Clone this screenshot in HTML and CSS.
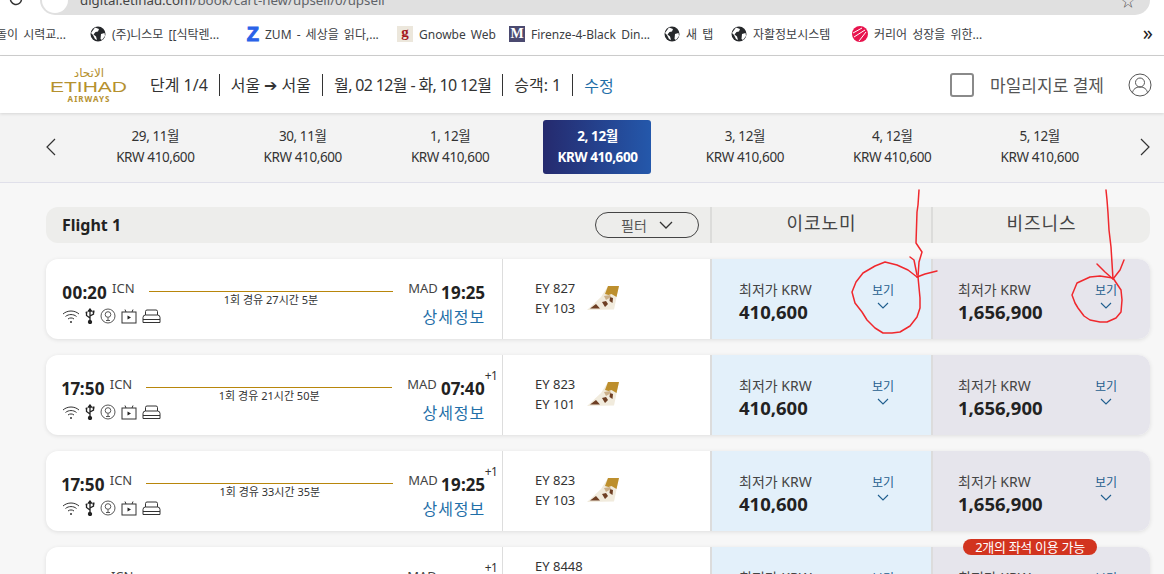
FILE: index.html
```html
<!DOCTYPE html>
<html lang="ko">
<head>
  <meta charset="UTF-8" />
  <title>Etihad Airways</title>
  <link rel="stylesheet" href="styles.css">
</head>
<body>
  <svg class="defs" width="0" height="0">
    <symbol id="globe" viewBox="0 0 16 16">
      <circle cx="8" cy="8" r="7.5" fill="#26282b"/>
      <path d="M5 1.500 9 3 8 5.500 5.500 6 3.500 8.500 6 10.500 7 14 5 13 3 9 1 7ZM11 8l3.500-1 .5 3-3 4-1.500-1z" fill="#fff"/>
    </symbol>
    <symbol id="wifi" viewBox="0 0 18 15" fill="none" stroke="#333" stroke-width="1">
      <path d="M1 5c4.500-4 11.500-4 16 0M3.500 7.500c3-2.600 8-2.600 11 0M6 10c1.700-1.400 4.300-1.400 6 0"/>
      <circle cx="9" cy="13" r="1" fill="#333" stroke="none"/>
    </symbol>
    <symbol id="usb" viewBox="0 0 10 16" fill="none" stroke="#222" stroke-width="1.300">
      <path d="M5 1v14M1.500 5v2.500L5 10M8.500 4v2L5 8"/>
      <circle cx="5" cy="14" r="1.500" fill="#222"/>
      <path d="M3.500 3 5 1l1.500 2z" fill="#222"/>
      <rect x="7.500" y="2.500" width="2" height="2" fill="#222" stroke="none"/>
      <circle cx="1.500" cy="4.500" r="1" fill="#222" stroke="none"/>
    </symbol>
    <symbol id="mic" viewBox="0 0 16 16" fill="none" stroke="#444" stroke-width=".9">
      <circle cx="8" cy="8" r="7"/>
      <circle cx="8" cy="6.500" r="2.800"/>
      <path d="M8 9.500V12M6 12.500h4"/>
    </symbol>
    <symbol id="tv" viewBox="0 0 16 16" fill="none" stroke="#333" stroke-width="1">
      <rect x="1" y="4" width="14" height="11"/>
      <path d="M4 1.500 5 4M12 1.500 11 4"/>
      <path d="M6.500 7.500v4l3.500-2z" fill="#222" stroke="none"/>
    </symbol>
    <symbol id="bed" viewBox="0 0 19 15" fill="none" stroke="#333" stroke-width="1">
      <path d="M3.500 6V2.500q0-1.500 1.500-1.500h9q1.500 0 1.500 1.500V6"/>
      <path d="M1 13.500V8.500Q1 6 3.500 6h12Q18 6 18 8.500v5ZM1 10.500h17"/>
    </symbol>
    <symbol id="tail" viewBox="0 0 32 25">
      <path d="M0 24 14 11 21 0h11l-5 23.500z" fill="#f1ebdd"/>
      <path d="M21 0h11l-2.500 11-5-3-3 1-3.500-1z" fill="#bd8f2d"/>
      <path d="M3 22.500 9 18l4 4.500zM15 16l4-1 2 3-3 3zM23 11l3 1-.5 5-3-2z" fill="#6e3f24"/>
      <path d="M17 10l6-1 1 2-5 3z" fill="#cbb08a"/>
    </symbol>
    <symbol id="down" viewBox="0 0 12 7" fill="none" stroke="#1f5e8e" stroke-width="1.100">
      <path d="M1 1l5 5 5-5"/>
    </symbol>
  </svg>

  <div class="page">
    <div class="addressbar">
      <svg class="reload" width="16" height="16" viewBox="0 0 16 16" fill="none" stroke="#333" stroke-width="1.500"><path d="M13.500 8A5.500 5.500 0 1 1 11 3.400"/></svg>
      <div class="urlpill">
        <span class="lockdot"></span>
        <span class="url">digital.etihad.com<span class="urlpath">/book/cart-new/upsell/0/upsell</span></span>
        <span class="star">☆</span>
      </div>
    </div>

    <div class="bookmarks">
      <span class="bm bm-cut">돌이 시력교...</span>
      <span class="bm bm-w121"><svg class="bmicon"><use href="#globe"/></svg>(주)니스모 [[식탁렌...</span>
      <span class="bm bm-w150"><span class="zicon">Z</span>ZUM - 세상을 읽다,...</span>
      <span class="bm bm-w96"><span class="gicon">g</span>Gnowbe Web</span>
      <span class="bm bm-w137"><span class="micon">M</span>Firenze-4-Black Din...</span>
      <span class="bm bm-w49"><svg class="bmicon"><use href="#globe"/></svg>새 탭</span>
      <span class="bm bm-w105"><svg class="bmicon"><use href="#globe"/></svg>자활정보시스템</span>
      <span class="bm bm-w136"><svg class="bmicon" viewBox="0 0 16 16"><circle cx="8" cy="8" r="8" fill="#e8144e"/><path d="M1 7l9-5M2 11l11-7M7 15l7-9" stroke="#fff" stroke-width="1"/></svg>커리어 성장을 위한...</span>
      <span class="bm-more">»</span>
    </div>

    <header class="topbar">
      <div class="logo">
        <span class="logo-ar">الاتحاد</span>
        <span class="logo-name">ETIHAD</span>
        <span class="logo-sub">AIRWAYS</span>
      </div>
      <div class="trip">
        <span>단계 1/4</span>
        <span>서울 ➔ 서울</span>
        <span class="trip-dates">월, 02 12월 - 화, 10 12월</span>
        <span>승객: 1</span>
        <a class="edit">수정</a>
      </div>
      <div class="miles">
        <span class="checkbox"></span>
        <span class="miles-label">마일리지로 결제</span>
        <svg width="24" height="24" viewBox="0 0 24 24" fill="none" stroke="#555" stroke-width="1"><circle cx="12" cy="12" r="11"/><circle cx="12" cy="9.500" r="4.500"/><path d="M4.500 20c.5-4 3.500-6 7.500-6s7 2 7.500 6"/></svg>
      </div>
    </header>

    <nav class="dates">
      <svg class="date-arrow" width="12" height="20" viewBox="0 0 12 20" fill="none" stroke="#333" stroke-width="1.200"><path d="M10 2 2 10l8 8"/></svg>
      <div class="date-list">
        <div class="date"><span>29, 11월</span><span>KRW 410,600</span></div>
        <div class="date"><span>30, 11월</span><span>KRW 410,600</span></div>
        <div class="date"><span>1, 12월</span><span>KRW 410,600</span></div>
        <div class="date date-on"><span>2, 12월</span><span>KRW 410,600</span></div>
        <div class="date"><span>3, 12월</span><span>KRW 410,600</span></div>
        <div class="date"><span>4, 12월</span><span>KRW 410,600</span></div>
        <div class="date"><span>5, 12월</span><span>KRW 410,600</span></div>
      </div>
      <svg class="date-arrow" width="12" height="20" viewBox="0 0 12 20" fill="none" stroke="#333" stroke-width="1.200"><path d="M2 2l8 8-8 8"/></svg>
    </nav>

    <main class="results">
      <div class="flight-head">
        <div class="flight-title">
          <strong>Flight 1</strong>
          <button class="filter">필터 <svg width="14" height="8" viewBox="0 0 14 8" fill="none" stroke="#333" stroke-width="1.300"><path d="M1 1l6 6 6-6"/></svg></button>
        </div>
        <div class="cabin">이코노미</div>
        <div class="cabin">비즈니스</div>
      </div>

      <article class="flight">
        <div class="leg">
          <div class="leg-top">
            <b class="time">00:20</b><span class="code">ICN</span>
            <div class="route"><i></i><span>1회 경유 27시간 5분</span></div>
            <span class="code">MAD</span><b class="time">19:25</b>
          </div>
          <div class="leg-bottom">
            <div class="amenities">
              <svg class="am-wifi"><use href="#wifi"/></svg><svg class="am-usb"><use href="#usb"/></svg><svg class="am-mic"><use href="#mic"/></svg><svg class="am-tv"><use href="#tv"/></svg><svg class="am-bed"><use href="#bed"/></svg>
            </div>
            <a class="details">상세정보</a>
          </div>
        </div>
        <div class="numbers">
          <div><p>EY 827</p><p>EY 103</p></div>
          <svg class="tail"><use href="#tail"/></svg>
        </div>
        <div class="fare fare-eco">
          <div><p class="fare-label">최저가 KRW</p><p class="fare-price">410,600</p></div>
          <div class="view">보기<svg class="view-arrow"><use href="#down"/></svg></div>
        </div>
        <div class="fare fare-biz">
          <div><p class="fare-label">최저가 KRW</p><p class="fare-price">1,656,900</p></div>
          <div class="view">보기<svg class="view-arrow"><use href="#down"/></svg></div>
        </div>
      </article>

      <article class="flight">
        <div class="leg">
          <div class="leg-top">
            <b class="time">17:50</b><span class="code">ICN</span>
            <div class="route"><i></i><span>1회 경유 21시간 50분</span></div>
            <span class="code">MAD</span><b class="time plus">07:40<sup>+1</sup></b>
          </div>
          <div class="leg-bottom">
            <div class="amenities">
              <svg class="am-wifi"><use href="#wifi"/></svg><svg class="am-usb"><use href="#usb"/></svg><svg class="am-mic"><use href="#mic"/></svg><svg class="am-tv"><use href="#tv"/></svg><svg class="am-bed"><use href="#bed"/></svg>
            </div>
            <a class="details">상세정보</a>
          </div>
        </div>
        <div class="numbers">
          <div><p>EY 823</p><p>EY 101</p></div>
          <svg class="tail"><use href="#tail"/></svg>
        </div>
        <div class="fare fare-eco">
          <div><p class="fare-label">최저가 KRW</p><p class="fare-price">410,600</p></div>
          <div class="view">보기<svg class="view-arrow"><use href="#down"/></svg></div>
        </div>
        <div class="fare fare-biz">
          <div><p class="fare-label">최저가 KRW</p><p class="fare-price">1,656,900</p></div>
          <div class="view">보기<svg class="view-arrow"><use href="#down"/></svg></div>
        </div>
      </article>

      <article class="flight">
        <div class="leg">
          <div class="leg-top">
            <b class="time">17:50</b><span class="code">ICN</span>
            <div class="route"><i></i><span>1회 경유 33시간 35분</span></div>
            <span class="code">MAD</span><b class="time plus">19:25<sup>+1</sup></b>
          </div>
          <div class="leg-bottom">
            <div class="amenities">
              <svg class="am-wifi"><use href="#wifi"/></svg><svg class="am-usb"><use href="#usb"/></svg><svg class="am-mic"><use href="#mic"/></svg><svg class="am-tv"><use href="#tv"/></svg><svg class="am-bed"><use href="#bed"/></svg>
            </div>
            <a class="details">상세정보</a>
          </div>
        </div>
        <div class="numbers">
          <div><p>EY 823</p><p>EY 103</p></div>
          <svg class="tail"><use href="#tail"/></svg>
        </div>
        <div class="fare fare-eco">
          <div><p class="fare-label">최저가 KRW</p><p class="fare-price">410,600</p></div>
          <div class="view">보기<svg class="view-arrow"><use href="#down"/></svg></div>
        </div>
        <div class="fare fare-biz">
          <div><p class="fare-label">최저가 KRW</p><p class="fare-price">1,656,900</p></div>
          <div class="view">보기<svg class="view-arrow"><use href="#down"/></svg></div>
        </div>
      </article>

      <article class="flight">
        <div class="leg">
          <div class="leg-top">
            <b class="time">07:20</b><span class="code">ICN</span>
            <div class="route"><i></i><span>1회 경유</span></div>
            <span class="code">MAD</span><b class="time plus">07:40<sup>+1</sup></b>
          </div>
        </div>
        <div class="numbers">
          <div><p>EY 8448</p><p>EY 823</p><p>EY 101</p></div>
          <svg class="tail"><use href="#tail"/></svg>
        </div>
        <div class="fare fare-eco">
          <div><p class="fare-label">최저가 KRW</p><p class="fare-price">410,600</p></div>
          <div class="view">보기<svg class="view-arrow"><use href="#down"/></svg></div>
        </div>
        <div class="fare fare-biz">
          <span class="seats">2개의 좌석 이용 가능</span>
          <div><p class="fare-label">최저가 KRW</p><p class="fare-price">1,656,900</p></div>
          <div class="view">보기<svg class="view-arrow"><use href="#down"/></svg></div>
        </div>
      </article>
    </main>

    <!-- red pen marks drawn over the screenshot -->
    <svg class="pen" width="1164" height="574" viewBox="0 0 1164 574" fill="none" stroke="#f0282d" stroke-width="1.500" stroke-linejoin="round" stroke-linecap="round">
      <path d="M919 190 918 205 917 212 916 243 922 252 919 262 918 277"/>
      <path d="M910 257 914 260 917 275M937 271 925 274 917 277"/>
      <path d="M917 277 908 270 897 265 885 262 875 266 863 273 856 282 852 292 855 303 862 312 867 320 875 328 883 333 892 333 900 332 910 326 917 317 920 308 920 298 918 277"/>
      <path d="M1106 190 1107 200 1108 213 1109 230 1111 247 1113 279"/>
      <path d="M1097 264 1105 272 1113 279M1124 260 1120 270 1113 279"/>
      <path d="M1113 278 1100 276 1090 277 1077 283 1072 295 1075 303 1078 308 1084 316 1090 320 1100 322 1107 322 1116 318 1121 312 1122 300 1121 290 1113 278"/>
    </svg>
  </div>
</body>
</html>
```

FILE: styles.css
```css
* {
  box-sizing: border-box;
}
html, body {
  margin: 0;
  height: 100%;
  overflow: hidden;
}
body {
  font-family: "Noto Sans", "Noto Sans CJK KR", sans-serif;
  color: #333;
  background: #f7f7f7;
}
p {
  margin: 0;
}
.defs {
  position: absolute;
}
.page {
  position: relative;
  height: 574px;
  overflow: hidden;
}

/* browser chrome */
.addressbar {
  height: 15px;
  background: #fff;
  display: flex;
  overflow: hidden;
}
.reload {
  flex: none;
  margin: -9px 0 0 8px;
}
.urlpill {
  flex: none;
  width: 1110px;
  margin-left: 16px;
  height: 15px;
  background: #e0e0e0;
  border-radius: 0 0 15px 15px;
  display: flex;
  align-items: flex-end;
  position: relative;
}
.lockdot {
  width: 26px;
  height: 26px;
  margin: 0 0 2px 2px;
  background: #fff;
  border-radius: 50%;
  flex: none;
}
.url {
  font-size: 13.300px;
  line-height: 16px;
  margin: 0 0 7px 12px;
  color: #444;
}
.urlpath {
  color: #5f6368;
}
.star {
  position: absolute;
  right: 15px;
  bottom: 7px;
  font-size: 14px;
  line-height: 14px;
  color: #555;
}
.bookmarks {
  height: 41px;
  padding-bottom: 2px;
  background: #fff;
  border-bottom: 1px solid #d0d0d0;
  display: flex;
  align-items: center;
  font-size: 12px;
  word-spacing: 2px;
  color: #3c4043;
  white-space: nowrap;
  position: relative;
}
.bm {
  display: flex;
  align-items: center;
  flex: none;
  gap: 6px;
}
.bm-cut {
  width: 94px;
  margin-left: -4px;
}
.bm-w121 { width: 141px; }
.bm-w150 { width: 166px; }
.bm-w96 { width: 112px; }
.bm-w137 { width: 155px; }
.bm-w49 { width: 67px; }
.bm-w105 { width: 121px; }
.bm-w136 { width: 136px; }
.bmicon {
  width: 16px;
  height: 16px;
  flex: none;
}
.zicon {
  width: 28px;
  height: 16px;
  color: #2a62e8;
  font: 900 20px/16px "Liberation Sans", sans-serif;
  -webkit-text-stroke: 1px #2a62e8;
  text-align: right;
}
.gicon {
  width: 16px;
  height: 16px;
  background: #ece7dc;
  color: #a5171c;
  font: bold 15px/13px "Liberation Serif", serif;
  text-align: center;
}
.micon {
  width: 16px;
  height: 16px;
  background: #4b4a70;
  color: #fff;
  font: bold 14px/16px "Liberation Serif", serif;
  text-align: center;
}
.bm-more {
  position: absolute;
  right: 11px;
  top: 6px;
  font-size: 20px;
  line-height: 24px;
  color: #222;
}

/* site header */
.topbar {
  height: 57px;
  background: #fff;
  display: flex;
  align-items: center;
  padding: 0 12px 0 51px;
  box-shadow: 0 1px 3px rgba(0, 0, 0, .12);
  position: relative;
}
.logo {
  width: 76px;
  display: flex;
  flex-direction: column;
  align-items: center;
  color: #b5912f;
  margin-right: 23px;
}
.logo-ar {
  font: 12px/14px "DejaVu Sans", sans-serif;
}
.logo-name {
  font: 15px/14px "Liberation Sans", sans-serif;
  transform: scaleX(1.400);
}
.logo-sub {
  font: bold 8px/10px "Noto Sans", sans-serif;
  letter-spacing: 1px;
}
.trip {
  display: flex;
  align-items: center;
  font-size: 16px;
  color: #333;
}
.trip span {
  padding-right: 11px;
  margin-right: 11px;
  border-right: 1px solid #333;
  line-height: 22px;
}
.trip .trip-dates {
  letter-spacing: -.65px;
}
.edit {
  color: #1f6fa8;
}
.miles {
  margin-left: auto;
  display: flex;
  align-items: center;
}
.checkbox {
  width: 24px;
  height: 24px;
  border: 2px solid #8a8a8a;
  border-radius: 3px;
  margin-right: 16px;
}
.miles-label {
  font-size: 17px;
  color: #555;
  margin-right: 24px;
}

/* date strip */
.dates {
  height: 70px;
  padding-bottom: 2px;
  background: #f3f3f3;
  border-bottom: 1px solid #e0e0ea;
  display: flex;
  align-items: center;
  padding-left: 45px;
  padding-right: 13px;
}
.date-list {
  flex: 1;
  display: grid;
  grid-template-columns: repeat(7, 147.400px);
  justify-content: center;
  margin: 0 1px 0 0;
}
.date {
  display: flex;
  flex-direction: column;
  align-items: center;
  justify-content: center;
  height: 54px;
  font-size: 13.500px;
  line-height: 21px;
  letter-spacing: -.4px;
  color: #333;
}
.date-on {
  width: 108px;
  justify-self: center;
  background: linear-gradient(90deg, #252a6e, #2458ab);
  color: #fff;
  font-weight: 700;
  border-radius: 3px;
}

/* results */
.results {
  padding: 24px 14px 0 46px;
}
.flight-head {
  height: 36px;
  background: #ededeb;
  border-radius: 12px;
  display: grid;
  grid-template-columns: 664px 221px 219px;
  margin-bottom: 16px;
}
.flight-title {
  display: flex;
  align-items: center;
  justify-content: space-between;
  padding: 0 11px 0 16px;
}
.flight-title strong {
  font-size: 16px;
  font-weight: 700;
  color: #222;
}
.filter {
  width: 104px;
  height: 26px;
  background: transparent;
  border: 1px solid #444;
  border-radius: 13px;
  font: 14px "Noto Sans", "Noto Sans CJK KR", sans-serif;
  color: #555;
  display: flex;
  align-items: center;
  justify-content: center;
  gap: 12px;
  padding: 0;
}
.cabin {
  border-left: 2px solid #dcdcda;
  text-align: center;
  font-size: 18px;
  line-height: 32px;
  color: #444;
  letter-spacing: 1px;
}
.flight {
  height: 80px;
  margin-bottom: 16px;
  display: grid;
  grid-template-columns: 457px 207px 221px 219px;
  background: #fff;
  border-radius: 12px;
  box-shadow: 0 1px 4px rgba(0, 0, 0, .1);
}
.leg {
  padding: 19px 17px 0 16px;
  border-right: 1px solid #ddd;
  min-width: 0;
}
.leg-top {
  display: flex;
  align-items: flex-start;
}
.time {
  font-size: 17px;
  line-height: 30px;
  font-weight: 700;
  font-variant-numeric: proportional-nums;
  color: #222;
  position: relative;
}
.time sup {
  position: absolute;
  right: -12px;
  top: -5px;
  font-size: 12px;
  line-height: 14px;
  font-weight: 400;
  color: #333;
}
.code {
  font-size: 13px;
  line-height: 20px;
  color: #444;
  margin: 0 4px;
}
.leg-top > .code:first-of-type {
  margin: 0 0 0 5px;
}
.route {
  flex: 1;
  margin: 13px 11px 0 14px;
  text-align: center;
  font-size: 11px;
  line-height: 15px;
  color: #333;
}
.route i {
  display: block;
  height: 1px;
  background: #b8860b;
}
.leg-bottom {
  display: flex;
  align-items: center;
  justify-content: space-between;
  margin-top: -4px;
}
.amenities {
  display: flex;
  align-items: center;
  gap: 5px;
  height: 16px;
}
.am-wifi { width: 18px; height: 15px; }
.am-usb { width: 10px; height: 16px; }
.am-mic { width: 16px; height: 16px; }
.am-tv { width: 16px; height: 16px; }
.am-bed { width: 19px; height: 15px; }
.details {
  font-size: 16px;
  line-height: 22px;
  color: #1f6fa8;
  letter-spacing: .9px;
  margin-top: 2px;
}
.numbers {
  padding: 0 0 2px 32px;
  display: flex;
  align-items: center;
  font-size: 13px;
  line-height: 20px;
  color: #333;
  gap: 12px;
}
.tail {
  width: 32px;
  height: 25px;
}
.fare {
  position: relative;
  display: flex;
  justify-content: space-between;
  align-items: center;
  padding: 0 37px 0 27px;
  border-left: 2px solid #dcdcdc;
}
.fare-eco {
  background: #e3f0fa;
}
.fare-biz {
  background: #e6e5ec;
  border-radius: 0 12px 12px 0;
  padding-left: 25px;
  padding-right: 33px;
}
.fare > div:not(.view) {
  margin-top: 4px;
}
.fare-label {
  font-size: 14px;
  line-height: 22px;
  color: #444;
}
.fare-price {
  font-size: 18.500px;
  line-height: 22px;
  font-weight: 700;
  color: #222;
}
.view {
  display: flex;
  flex-direction: column;
  align-items: center;
  font-size: 12px;
  line-height: 16px;
  color: #1f5e8e;
  margin-bottom: 6px;
}
.view-arrow {
  width: 12px;
  height: 7px;
  margin-top: 3px;
}
.seats {
  position: absolute;
  left: 30px;
  top: -8px;
  width: 134px;
  height: 16px;
  background: #d2341f;
  color: #fff;
  border-radius: 8px;
  font-size: 13px;
  line-height: 16px;
  letter-spacing: -.3px;
  text-align: center;
}
.pen {
  position: absolute;
  left: 0;
  top: 0;
  pointer-events: none;
}
```
